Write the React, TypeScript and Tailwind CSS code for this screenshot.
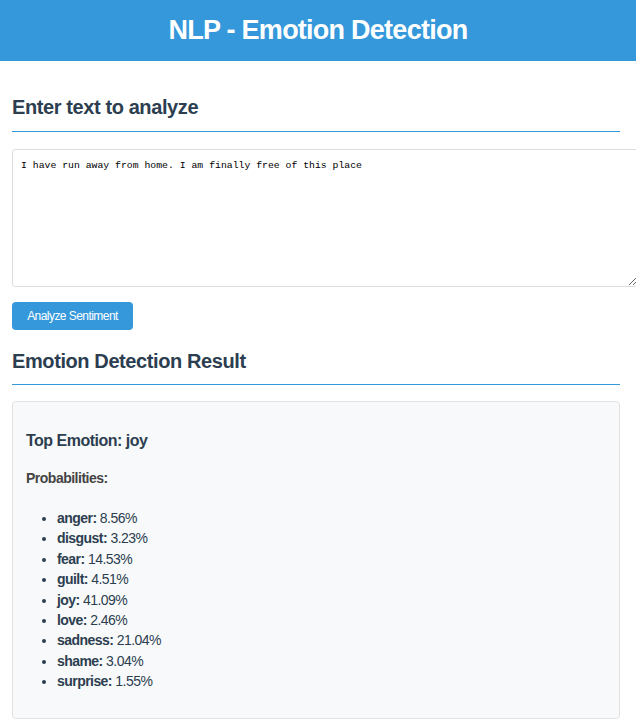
import React from "react";

const probs: [string, string][] = [
  ["anger", "8.56%"],
  ["disgust", "3.23%"],
  ["fear", "14.53%"],
  ["guilt", "4.51%"],
  ["joy", "41.09%"],
  ["love", "2.46%"],
  ["sadness", "21.04%"],
  ["shame", "3.04%"],
  ["surprise", "1.55%"],
];

export default function App() {
  return (
    <div className="min-h-[719px] bg-white text-[#333] font-['Liberation_Sans',Arial,sans-serif] overflow-hidden">
      <header className="bg-[#3498db] h-[61px] flex items-center justify-center">
        <h1 className="text-white font-bold text-[27px] leading-none tracking-[-0.75px]">NLP - Emotion Detection</h1>
      </header>
      <div className="pl-3 pr-4">
        <h2 className="mt-[34px] text-[20px] leading-[24px] font-bold text-[#2c3e50] pb-[12px] border-b border-[#3498db] tracking-[-0.4px]">
          Enter text to analyze
        </h2>
        <textarea
          className="block mt-[17px] w-[626px] h-[138px] border border-[#ddd] rounded-[3px] px-2 py-[9px] font-['Liberation_Mono',monospace] text-[9.8px] leading-[13px] text-black resize-y"
          defaultValue="I have run away from home. I am finally free of this place"
        />
        <button className="mt-[15px] h-[28px] w-[121px] bg-[#3498db] text-white text-[12px] tracking-[-0.55px] rounded-[4px] flex items-center justify-center">
          Analyze Sentiment
        </button>
        <h2 className="mt-[19px] text-[20px] leading-[24px] font-bold text-[#2c3e50] pb-[11px] border-b border-[#3498db] tracking-[-0.4px]">
          Emotion Detection Result
        </h2>
        <div className="mt-[16px] bg-[#f8f9fa] border border-[#e3e3e3] rounded-[4px] px-[13px] pt-[30px] pb-[26px]">
          <h3 className="text-[16px] leading-[18px] font-bold text-[#2c3e50] tracking-[-0.5px]">Top Emotion: joy</h3>
          <p className="mt-[20px] text-[14px] leading-[16px] font-bold text-[#444] tracking-[-0.5px]">Probabilities:</p>
          <ul className="mt-[22px] list-disc pl-[31px] text-[14px] leading-[20.4px] text-[#2c3e50] tracking-[-0.55px]">
            {probs.map(([k, v]) => (
              <li key={k}>
                <strong>{k}:</strong> {v}
              </li>
            ))}
          </ul>
        </div>
      </div>
    </div>
  );
}
